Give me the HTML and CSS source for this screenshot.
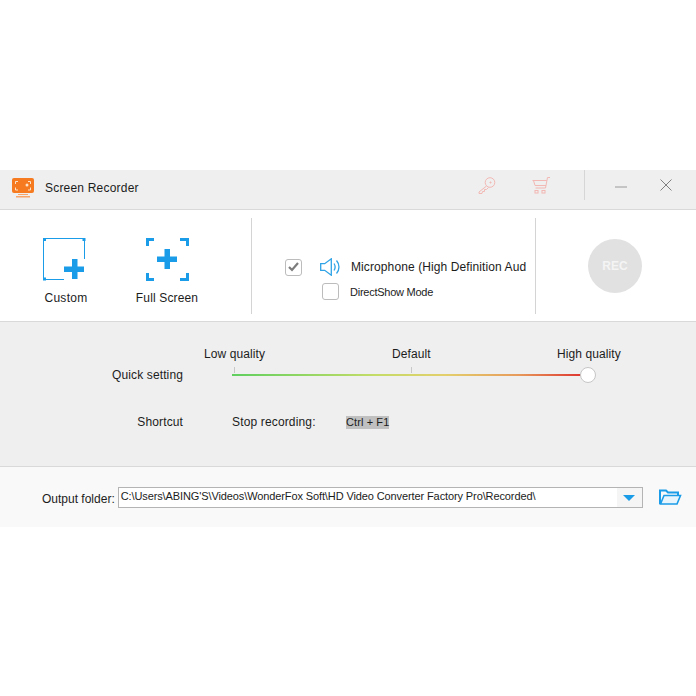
FILE: index.html
```html
<!DOCTYPE html>
<html lang="en">
<head>
<meta charset="utf-8">
<title>Screen Recorder</title>
<link rel="stylesheet" href="styles.css">
</head>
<body>
<main class="window">
  <header class="titlebar">
    <svg class="logo" width="22" height="20" viewBox="0 0 22 20">
      <path d="M2 0h18a2 2 0 0 1 2 2v11a2 2 0 0 1-2 2H2a2 2 0 0 1-2-2V2a2 2 0 0 1 2-2z" fill="#f57a20"/>
      <path d="M3.500 6V3.500H6M16 3.500h2.500V6M3.500 9.500V12H6M16 12h2.500V9.500" fill="none" stroke="#fde3c8" stroke-width="1"/>
      <circle cx="15" cy="7" r="1.500" fill="#fde3c8"/>
      <path d="M6 16h10v1H6zM4 18h14v1.500H4z" fill="#f9a468"/>
    </svg>
    <span class="app-name">Screen Recorder</span>
    <svg class="key" width="18" height="17" viewBox="0 0 18 17" fill="none" stroke="#f2b8b4" stroke-width="1">
      <circle cx="12" cy="5.500" r="4.800"/>
      <path d="M8.500 9 1 15v1.500h3l.5-2h2v-2h2l2-2"/>
      <path d="M11.500 5.500h2M12.500 4.500v2"/>
    </svg>
    <svg class="cart" width="18" height="17" viewBox="0 0 18 17" fill="none" stroke="#f2b8b4" stroke-width="1">
      <path d="M18 .5h-2.500L13.500 11h-10M.5 3.500h14.300M1.500 3.500l1.500 5h11"/>
      <rect x="3" y="13.500" width="3" height="2.500"/>
      <rect x="10" y="13.500" width="3" height="2.500"/>
    </svg>
    <span class="title-sep"></span>
    <svg class="minimize" width="12" height="2" viewBox="0 0 12 2"><path d="M0 1h12" stroke="#9a9a9a" stroke-width="1"/></svg>
    <svg class="close" width="12" height="12" viewBox="0 0 12 12"><path d="M.5.500l11 11M11.500.500l-11 11" stroke="#808080" stroke-width="1" fill="none"/></svg>
  </header>

  <section class="capture">
    <div class="modes">
      <div class="mode mode-custom">
        <svg width="43" height="43" viewBox="0 0 43 43">
          <path d="M1 .5h40.500V21M.5 1v40.500H21" fill="none" stroke="#1b9ce8" stroke-width="1"/>
          <path d="M0 0h3v3H0zM39.500 0h3v3h-3zM0 39.500h3v3H0z" fill="#1b9ce8"/>
          <path d="M29 21h5.500v7.500H41V34h-6.500v7H29v-7h-8v-5.500h8z" fill="#1b9ce8"/>
        </svg>
        <span class="mode-label">Custom</span>
      </div>
      <div class="mode mode-full">
        <svg width="43" height="43" viewBox="0 0 43 43" fill="none" stroke="#1b9ce8" stroke-width="3">
          <path d="M8 1.500H1.500V8M34 1.500h7.500V8M8 41.500H1.500V35M34 41.500h7.500V35"/>
          <path d="M18.500 11h5.500v7.500H31V24h-7v7h-5.500v-7H11v-5.500h7.500z" fill="#1b9ce8" stroke="none"/>
        </svg>
        <span class="mode-label">Full Screen</span>
      </div>
    </div>
    <div class="audio">
      <div class="audio-row">
        <span class="checkbox">
          <svg width="11" height="10" viewBox="0 0 11 10"><path d="M1 5l3 3 6-7" fill="none" stroke="#7c7c7c" stroke-width="2.200"/></svg>
        </span>
        <svg class="speaker" width="21" height="18" viewBox="0 0 21 18" fill="none" stroke="#2fa3e6" stroke-width="1.300">
          <path d="M.7 5.700h4L11.300.8v16.400l-6.600-4.900h-4z"/>
          <path d="M14 5.500c1.300 2 1.300 5 0 7M16.500 2.500c3.300 3.800 3.300 9.200 0 13"/>
        </svg>
        <span class="device">Microphone (High Definition Aud</span>
      </div>
      <div class="audio-row audio-row-sub">
        <span class="checkbox"></span>
        <span class="directshow">DirectShow Mode</span>
      </div>
    </div>
    <div class="rec-area">
      <div class="rec">REC</div>
    </div>
  </section>

  <section class="settings">
    <div class="quick">
      <span class="row-label quick-label">Quick setting</span>
      <div class="slider">
        <div class="scale">
          <span>Low quality</span>
          <span class="scale-mid">Default</span>
          <span class="scale-high">High quality</span>
        </div>
        <div class="ticks"><i></i><i></i><i></i></div>
        <div class="track"><span class="thumb"></span></div>
      </div>
    </div>
    <div class="shortcut">
      <span class="row-label">Shortcut</span>
      <span class="stop">Stop recording:</span>
      <span class="keys">Ctrl + F1</span>
    </div>
  </section>

  <footer class="output">
    <span class="output-label">Output folder:</span>
    <div class="path">
      <span class="path-text">C:\Users\ABING'S\Videos\WonderFox Soft\HD Video Converter Factory Pro\Recorded\</span>
      <span class="path-arrow"></span>
    </div>
    <svg class="folder" width="23" height="16" viewBox="0 0 23 16">
      <path d="M1 15V1.500h6l2 2h10v2.500" fill="none" stroke="#1b9ce8" stroke-width="2"/>
      <path d="M1.500 15 5 6.500h16.500L18 15z" fill="#e9f5fd" stroke="#1b9ce8" stroke-width="1.600"/>
    </svg>
  </footer>
</main>
</body>
</html>
```
FILE: styles.css
```css
* { box-sizing: border-box; }
html, body { margin: 0; height: 100%; background: #fff; }
body {
  padding-top: 170px;
  font-family: "Liberation Sans", Arial, sans-serif;
  font-size: 12px;
  color: #1c1c1c;
}
.window { width: 696px; }

.titlebar {
  height: 40px;
  display: flex;
  align-items: center;
  background: #efefef;
  border-bottom: 1px solid #d9d9d9;
  padding-left: 12px;
}
.logo { margin-top: -3px; }
.app-name { margin-left: 11px; width: 433px; margin-top: -4px; letter-spacing: 0.2px; }
.key { margin-top: -8px; }
.cart { margin-left: 36px; margin-top: -8px; }
.title-sep { width: 1px; height: 30px; background: #d6d6d6; margin: -9px 0 0 34px; }
.minimize { margin-left: 30px; margin-top: -6px; }
.close { margin-left: 33px; margin-top: -10px; }

.capture {
  height: 112px;
  display: flex;
  background: #fff;
  border-bottom: 1px solid #d9d9d9;
  padding: 8px 0 7px;
}
.modes {
  width: 252px;
  display: flex;
  border-right: 1px solid #d4d4d4;
}
.mode { display: flex; flex-direction: column; align-items: center; padding-top: 20px; }
.mode-custom { width: 132px; }
.mode-custom svg { margin-left: -4px; }
.mode-full { width: 70px; }
.mode-label { margin-top: 10px; line-height: 14px; letter-spacing: 0.15px; }
.mode-custom .mode-label { letter-spacing: 0.3px; }
.audio {
  width: 284px;
  border-right: 1px solid #d4d4d4;
  padding: 40px 0 0 33px;
  display: flex;
  flex-direction: column;
}
.audio-row { display: flex; align-items: center; }
.audio-row-sub { margin: 7px 0 0 37px; }
.checkbox {
  width: 17px;
  height: 17px;
  border: 1px solid #bcbcbc;
  border-radius: 3px;
  background: #fff;
  display: flex;
  align-items: center;
  justify-content: center;
}
.speaker { margin-left: 18px; }
.device { margin-left: 10px; white-space: nowrap; letter-spacing: 0.1px; }
.directshow { margin-left: 11px; font-size: 11px; letter-spacing: -0.25px; }
.rec-area { flex: 1; display: flex; padding: 21px 0 0 52px; }
.rec {
  width: 54px;
  height: 54px;
  border-radius: 50%;
  background: #e1e1e1;
  color: #f4f4f4;
  font-weight: bold;
  display: flex;
  align-items: center;
  justify-content: center;
  font-size: 12px;
}

.settings {
  height: 145px;
  background: #efefef;
  border-bottom: 1px solid #d9d9d9;
  padding-top: 24px;
}
.quick { display: flex; align-items: flex-start; }
.row-label { width: 183px; text-align: right; flex: none; letter-spacing: 0.12px; }
.quick-label { padding-top: 22px; line-height: 14px; }
.slider { width: 396px; margin-left: 49px; position: relative; }
.scale { display: flex; position: relative; height: 14px; line-height: 14px; margin-left: -28px; letter-spacing: 0.1px; padding-top: 1px; }
.scale-mid { position: absolute; left: 188px; }
.scale-high { position: absolute; left: 353px; white-space: nowrap; }
.ticks { display: flex; height: 6px; margin-top: 7px; margin-left: 2px; width: 354px; justify-content: space-between; }
.ticks i { width: 1px; height: 6px; background: #c8c8c8; }
.track {
  width: 356px;
  height: 2px;
  margin-top: 1px;
  background: linear-gradient(to right, #5fcf5f 0%, #c4dc68 40%, #e3cf6c 60%, #e79c5c 80%, #dd2c2c 100%);
  position: relative;
}
.thumb {
  position: absolute;
  right: -8px;
  top: -7px;
  width: 16px;
  height: 16px;
  border-radius: 50%;
  background: #fff;
  border: 1px solid #c6c6c6;
}
.shortcut { display: flex; align-items: center; margin-top: 33px; }
.stop { margin-left: 49px; width: 114px; letter-spacing: 0.15px; }
.keys { background: #c0c0c0; font-size: 11px; line-height: 13px; letter-spacing: 0.1px; }

.output {
  height: 60px;
  background: #f9f9f9;
  display: flex;
  align-items: center;
  padding-left: 42px;
}
.output-label { margin-top: 3px; }
.path {
  width: 525px;
  height: 21px;
  margin-left: 3px;
  background: #fff;
  border: 1px solid #b4b4b4;
  display: flex;
  align-items: center;
  justify-content: space-between;
  font-size: 11px;
  padding-left: 2px;
}
.path-text { white-space: nowrap; margin-top: -2px; letter-spacing: -0.11px; }
.path-arrow {
  width: 25px;
  height: 19px;
  background: #f5f5f5;
  position: relative;
}
.path-arrow::after {
  content: "";
  position: absolute;
  left: 6px;
  top: 7px;
  border-style: solid;
  border-width: 6px 6px 0;
  border-color: #1b9ce8 transparent transparent;
}
.folder { margin-left: 16px; }
```
